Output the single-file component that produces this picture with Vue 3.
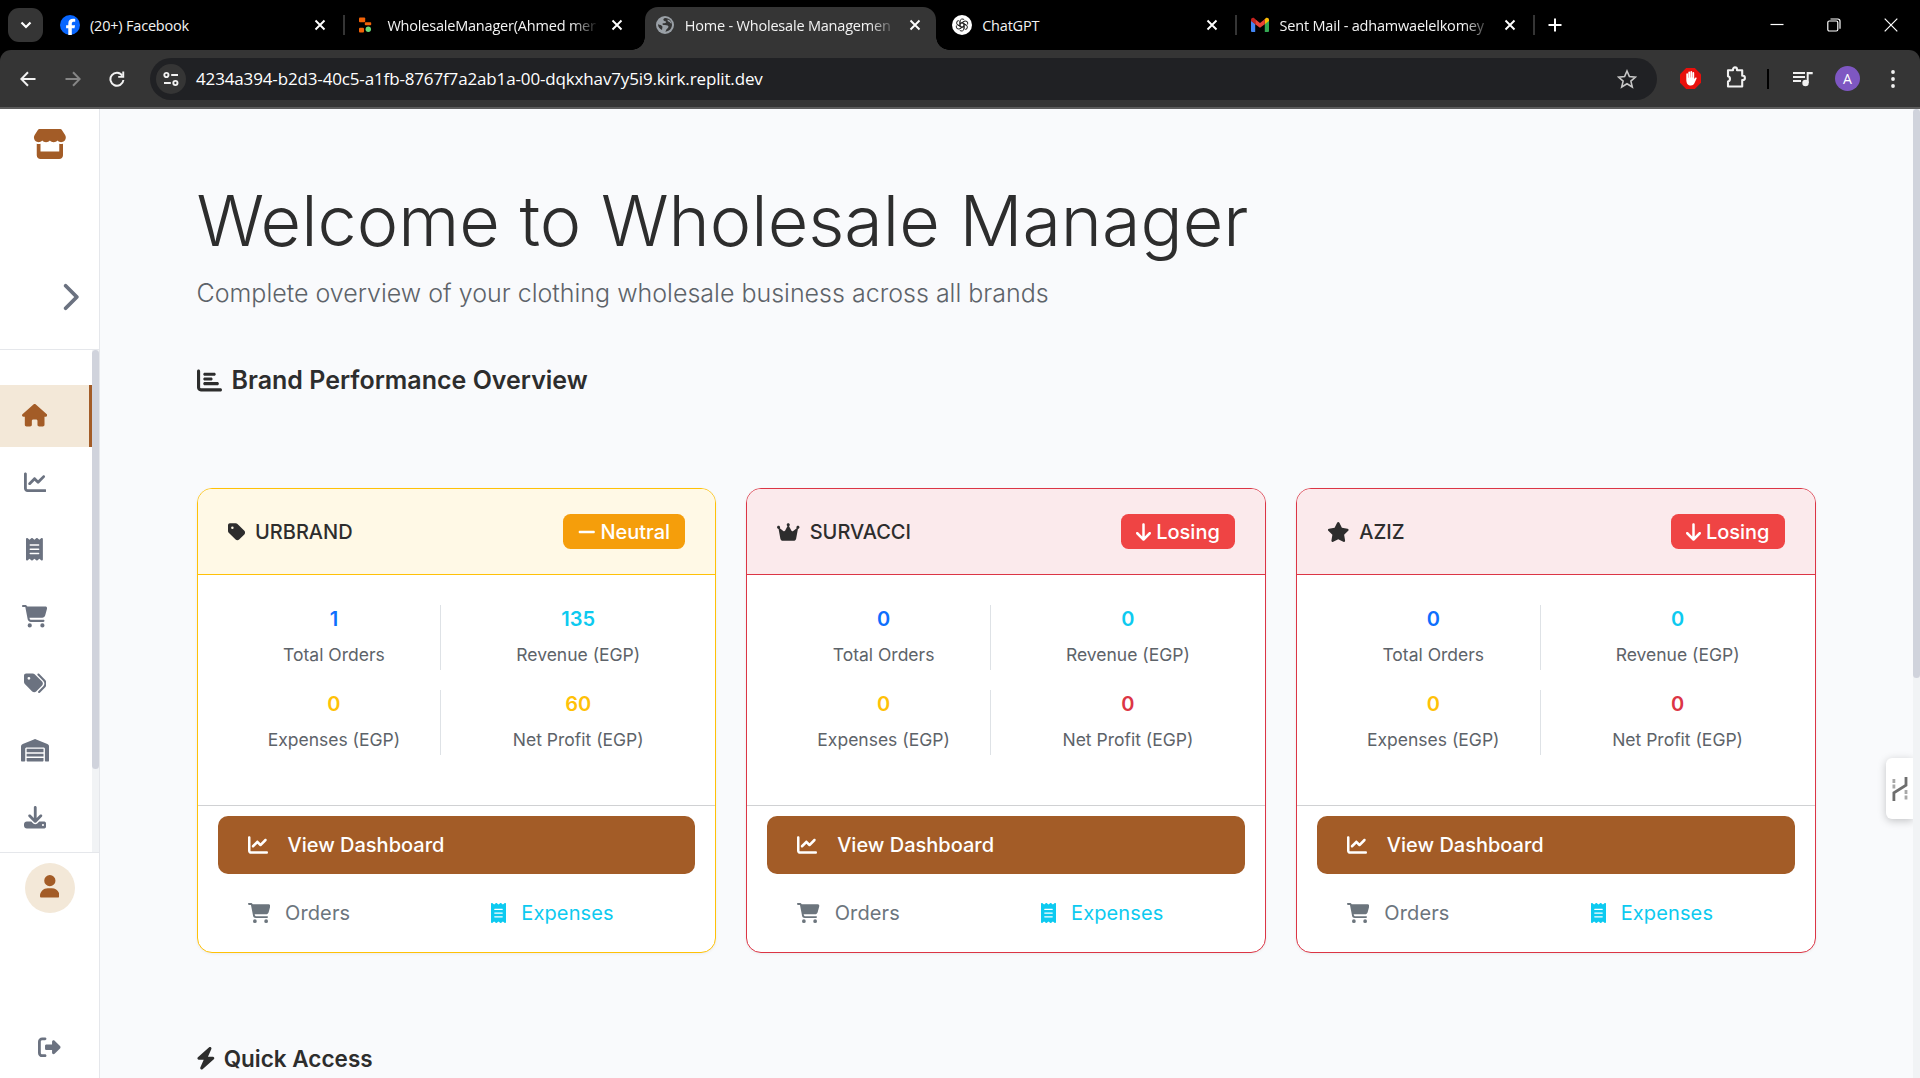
<script setup>
import { h } from 'vue'

const icons = {
  store: [576, 'M547.6 103.8L490.3 13.1C485.2 5 476.1 0 466.4 0H109.6C99.9 0 90.8 5 85.7 13.1L28.3 103.8c-29.6 46.8-3.4 111.9 51.9 119.4c4 .5 8.1 .8 12.1 .8c26.1 0 49.3-11.4 65.2-29c15.9 17.6 39.1 29 65.2 29c26.1 0 49.3-11.4 65.2-29c15.9 17.6 39.1 29 65.2 29c26.2 0 49.3-11.4 65.2-29c16 17.6 39.1 29 65.2 29c4.1 0 8.1-.3 12.1-.8c55.5-7.4 81.8-72.5 52.1-119.4zM499.7 254.9l-.1 0c-5.3 .7-10.7 1.1-16.2 1.1c-12.4 0-24.3-1.9-35.4-5.3V384H128V250.6c-11.2 3.5-23.2 5.4-35.6 5.4c-5.5 0-11-.4-16.3-1.1l-.1 0c-4.1-.6-8.1-1.3-12-2.3V384v64c0 35.3 28.7 64 64 64H448c35.3 0 64-28.7 64-64V384 252.6c-4 1-8 1.8-12.3 2.3z'],
  chevron: [320, 'M310.6 233.4c12.5 12.5 12.5 32.8 0 45.3l-192 192c-12.5 12.5-32.8 12.5-45.3 0s-12.5-32.8 0-45.3L242.7 256 73.4 86.6c-12.5-12.5-12.5-32.8 0-45.3s32.8-12.5 45.3 0l192 192z'],
  house: [576, 'M575.8 255.5c0 18-15 32.1-32 32.1h-32l.7 160.2c0 2.7-.2 5.4-.5 8.1V472c0 22.1-17.9 40-40 40H456c-1.1 0-2.2 0-3.3-.1c-1.4 .1-2.8 .1-4.2 .1H416 392c-22.1 0-40-17.9-40-40V448 384c0-17.7-14.3-32-32-32H256c-17.7 0-32 14.3-32 32v64 24c0 22.1-17.9 40-40 40H160 128.1c-1.5 0-3-.1-4.5-.2c-1.2 .1-2.4 .2-3.6 .2H104c-22.1 0-40-17.9-40-40V360c0-.9 0-1.9 .1-2.8V287.6H32c-18 0-32-14-32-32.1c0-9 3-17 10-24L266.4 8c7-7 15-8 22-8s15 2 21 7L564.8 231.5c8 7 12 15 11 24z'],
  line: [512, 'M64 64c0-17.7-14.3-32-32-32S0 46.3 0 64V400c0 44.2 35.8 80 80 80H480c17.7 0 32-14.3 32-32s-14.3-32-32-32H80c-8.8 0-16-7.2-16-16V64zm406.6 86.6c12.5-12.5 12.5-32.8 0-45.3s-32.8-12.5-45.3 0L320 210.7l-57.4-57.4c-12.5-12.5-32.8-12.5-45.3 0l-112 112c-12.5 12.5-12.5 32.8 0 45.3s32.8 12.5 45.3 0L240 221.3l57.4 57.4c12.5 12.5 32.8 12.5 45.3 0l128-128z'],
  receipt: [384, 'M14 2.2C22.5-1.7 32.5-.3 39.6 5.8L80 40.4 120.4 5.8c9-7.7 22.3-7.7 31.2 0L192 40.4 232.4 5.8c9-7.7 22.3-7.7 31.2 0L304 40.4 344.4 5.8c7.1-6.1 17.1-7.5 25.6-3.6s14 12.4 14 21.8V488c0 9.4-5.5 17.9-14 21.8s-18.5 2.5-25.6-3.6L304 471.6l-40.4 34.6c-9 7.7-22.3 7.7-31.2 0L192 471.6l-40.4 34.6c-9 7.7-22.3 7.7-31.2 0L80 471.6 39.6 506.2c-7.1 6.1-17.1 7.5-25.6 3.6S0 497.4 0 488V24C0 14.6 5.5 6.1 14 2.2zM96 144c-8.8 0-16 7.2-16 16s7.2 16 16 16H288c8.8 0 16-7.2 16-16s-7.2-16-16-16H96zM80 352c0 8.8 7.2 16 16 16H288c8.8 0 16-7.2 16-16s-7.2-16-16-16H96c-8.8 0-16 7.2-16 16zM96 240c-8.8 0-16 7.2-16 16s7.2 16 16 16H288c8.8 0 16-7.2 16-16s-7.2-16-16-16H96z'],
  cart: [576, 'M0 24C0 10.7 10.7 0 24 0H69.5c22 0 41.5 12.8 50.6 32h411c26.3 0 45.5 25 38.6 50.4l-41 152.3c-8.5 31.4-37 53.3-69.5 53.3H170.7l5.4 28.5c2.2 11.3 12.1 19.5 23.6 19.5H488c13.3 0 24 10.7 24 24s-10.7 24-24 24H199.7c-34.6 0-64.3-24.6-70.7-58.5L77.4 54.5c-.7-3.8-4-6.5-7.9-6.5H24C10.7 48 0 37.3 0 24zM128 464a48 48 0 1 1 96 0 48 48 0 1 1 -96 0zm336-48a48 48 0 1 1 0 96 48 48 0 1 1 0-96z'],
  tags: [512, 'M345 39.1L472.8 168.4c52.4 53 52.4 138.2 0 191.2L360.8 472.9c-9.3 9.4-24.5 9.5-33.9 .2s-9.5-24.5-.2-33.9L438.6 325.9c33.9-34.3 33.9-89.4 0-123.7L310.9 72.9c-9.3-9.4-9.2-24.6 .2-33.9s24.6-9.2 33.9 .2zM0 229.5V80C0 53.5 21.5 32 48 32H197.5c17 0 33.3 6.7 45.3 18.7l168 168c25 25 25 65.5 0 90.5L277.3 442.7c-25 25-65.5 25-90.5 0l-168-168C6.7 262.7 0 246.5 0 229.5zM144 144a32 32 0 1 0 -64 0 32 32 0 1 0 64 0z'],
  warehouse: [640, 'M0 488V171.3c0-26.2 15.9-49.7 40.2-59.4L308.1 4.8c7.6-3.1 16.1-3.1 23.8 0L599.8 111.9c24.3 9.7 40.2 33.3 40.2 59.4V488c0 13.3-10.7 24-24 24H568c-13.3 0-24-10.7-24-24V224c0-17.7-14.3-32-32-32H128c-17.7 0-32 14.3-32 32V488c0 13.3-10.7 24-24 24H24c-13.3 0-24-10.7-24-24zm488 24l-336 0c-13.3 0-24-10.7-24-24V432H512l0 56c0 13.3-10.7 24-24 24zM128 400V336H512v64H128zm0-96V224H512l0 80H128z'],
  download: [512, 'M288 32c0-17.7-14.3-32-32-32s-32 14.3-32 32V274.7l-73.4-73.4c-12.5-12.5-32.8-12.5-45.3 0s-12.5 32.8 0 45.3l128 128c12.5 12.5 32.8 12.5 45.3 0l128-128c12.5-12.5 12.5-32.8 0-45.3s-32.8-12.5-45.3 0L288 274.7V32zM64 352c-35.3 0-64 28.7-64 64v32c0 35.3 28.7 64 64 64H448c35.3 0 64-28.7 64-64V416c0-35.3-28.7-64-64-64H346.5l-45.3 45.3c-25 25-65.5 25-90.5 0L165.5 352H64zm368 56a24 24 0 1 1 0 48 24 24 0 1 1 0-48z'],
  user: [448, 'M224 256A128 128 0 1 0 224 0a128 128 0 1 0 0 256zm-45.7 48C79.8 304 0 383.8 0 482.3C0 498.7 13.3 512 29.7 512H418.3c16.4 0 29.7-13.3 29.7-29.7C448 383.8 368.2 304 269.7 304H178.3z'],
  logout: [512, 'M377.9 105.9L500.7 228.7c7.2 7.2 11.3 17.1 11.3 27.3s-4.1 20.1-11.3 27.3L377.9 406.1c-6.4 6.4-15 9.9-24 9.9c-18.7 0-33.9-15.2-33.9-33.9l0-62.1-128 0c-17.7 0-32-14.3-32-32l0-64c0-17.7 14.3-32 32-32l128 0 0-62.1c0-18.7 15.2-33.9 33.9-33.9c9 0 17.6 3.6 24 9.9zM160 96L96 96c-17.7 0-32 14.3-32 32l0 256c0 17.7 14.3 32 32 32l64 0c17.7 0 32 14.3 32 32s-14.3 32-32 32l-64 0c-53 0-96-43-96-96L0 128C0 75 43 32 96 32l64 0c17.7 0 32 14.3 32 32s-14.3 32-32 32z'],
  bars: [512, 'M32 32c17.7 0 32 14.3 32 32V400c0 8.8 7.2 16 16 16H480c17.7 0 32 14.3 32 32s-14.3 32-32 32H80c-44.2 0-80-35.8-80-80V64C0 46.3 14.3 32 32 32zm96 96c0-17.7 14.3-32 32-32l192 0c17.7 0 32 14.3 32 32s-14.3 32-32 32l-192 0c-17.7 0-32-14.3-32-32zm32 64H288c17.7 0 32 14.3 32 32s-14.3 32-32 32H160c-17.7 0-32-14.3-32-32s14.3-32 32-32zm0 96H416c17.7 0 32 14.3 32 32s-14.3 32-32 32H160c-17.7 0-32-14.3-32-32s14.3-32 32-32z'],
  tag: [448, 'M0 80V229.5c0 17 6.7 33.3 18.7 45.3l176 176c25 25 65.5 25 90.5 0L418.7 317.3c25-25 25-65.5 0-90.5l-176-176c-12-12-28.3-18.7-45.3-18.7H48C21.5 32 0 53.5 0 80zm112 32a32 32 0 1 1 0 64 32 32 0 1 1 0-64z'],
  crown: [576, 'M309 106c11.4-7 19-19.7 19-34c0-22.1-17.9-40-40-40s-40 17.9-40 40c0 14.4 7.6 27 19 34L209.7 220.6c-9.1 18.2-32.7 23.4-48.6 10.7L72 160c5-6.7 8-15 8-24c0-22.1-17.9-40-40-40S0 113.9 0 136s17.9 40 40 40c.2 0 .5 0 .7 0L86.4 427.4c5.5 30.4 32 52.6 63 52.6H426.6c30.9 0 57.4-22.1 63-52.6L535.3 176c.2 0 .5 0 .7 0c22.1 0 40-17.9 40-40s-17.9-40-40-40s-40 17.9-40 40c0 9 3 17.3 8 24l-89.1 71.3c-15.9 12.7-39.5 7.5-48.6-10.7L309 106z'],
  star: [576, 'M316.9 18C311.6 7 300.4 0 288.1 0s-23.4 7-28.8 18L195 150.3 51.4 171.5c-12 1.8-22 10.2-25.7 21.7s-.7 24.2 7.9 32.7L137.8 329 113.2 474.7c-2 12 3 24.2 12.9 31.3s23 8 33.8 2.3l128.3-68.5 128.3 68.5c10.8 5.7 23.9 4.9 33.8-2.3s14.9-19.3 12.9-31.3L438.5 329 542.7 225.9c8.6-8.5 11.7-21.2 7.9-32.7s-13.7-19.9-25.7-21.7L381.2 150.3 316.9 18z'],
  minus: [448, 'M432 256c0 17.7-14.3 32-32 32L48 288c-17.7 0-32-14.3-32-32s14.3-32 32-32l352 0c17.7 0 32 14.3 32 32z'],
  down: [384, 'M169.4 470.6c12.5 12.5 32.8 12.5 45.3 0l160-160c12.5-12.5 12.5-32.8 0-45.3s-32.8-12.5-45.3 0L224 370.8 224 64c0-17.7-14.3-32-32-32s-32 14.3-32 32l0 306.7L54.6 265.4c-12.5-12.5-32.8-12.5-45.3 0s-12.5 32.8 0 45.3l160 160z'],
  bolt: [448, 'M349.4 44.6c5.9-13.7 1.5-29.7-10.6-38.5s-28.6-8-39.9 1.8l-256 224c-10 8.8-13.6 22.9-8.9 35.3S50.7 288 64 288H175.5L98.6 467.4c-5.9 13.7-1.5 29.7 10.6 38.5s28.6 8 39.9-1.8l256-224c10-8.8 13.6-22.9 8.9-35.3s-16.6-20.7-30-20.7H272.5L349.4 44.6z'],
}

// Solid glyph drawn one em tall, in the text colour.
const Icon = ({ name }) => {
  const [w, d] = icons[name]
  return h('svg', { viewBox: `0 0 ${w} 512`, style: { height: '1em', width: `${w / 512}em`, flex: 'none', display: 'block' } }, [
    h('path', { fill: 'currentColor', d }),
  ])
}
Icon.props = ['name']

const tabs = [
  { id: 'fb', title: '(20+) Facebook', sep: true },
  { id: 'replit', title: 'WholesaleManager(Ahmed mer', fade: true },
  { id: 'globe', title: 'Home - Wholesale Managemen', active: true, fade: true },
  { id: 'gpt', title: 'ChatGPT', sep: true },
  { id: 'gmail', title: 'Sent Mail - adhamwaelelkomey', sep: true, fade: true },
]

const nav = ['house', 'line', 'receipt', 'cart', 'tags', 'warehouse', 'download']

const brand = (name, icon, tone, badge, badgeIcon, values) => ({
  name, icon, tone, badge, badgeIcon,
  stats: [
    { label: 'Total Orders', value: values[0], color: 'blue' },
    { label: 'Revenue (EGP)', value: values[1], color: 'cyan' },
    { label: 'Expenses (EGP)', value: values[2], color: 'amber' },
    { label: 'Net Profit (EGP)', value: values[3], color: tone === 'neutral' ? 'amber' : 'red' },
  ],
})
const brands = [
  brand('URBRAND', 'tag', 'neutral', 'Neutral', 'minus', [1, 135, 0, 60]),
  brand('SURVACCI', 'crown', 'losing', 'Losing', 'down', [0, 0, 0, 0]),
  brand('AZIZ', 'star', 'losing', 'Losing', 'down', [0, 0, 0, 0]),
]
</script>

<template>
  <div class="window">
    <header class="tabstrip">
      <div class="tab-search">
        <svg width="12" height="8" viewBox="0 0 12 8"><path d="M1.5 1.5 6 6l4.500-4.500" fill="none" stroke="#fff" stroke-width="2.200" /></svg>
      </div>
      <div v-for="t in tabs" :key="t.id" class="slot">
        <div class="tab" :class="{ active: t.active }">
          <span class="fav">
            <svg v-if="t.id === 'fb'" width="20" height="20" viewBox="0 0 20 20">
              <circle cx="10" cy="10" r="10" fill="#0866ff" />
              <path d="M8.300 20v-6.700H6.100v-3.100h2.200V8.800c0-3.500 1.600-5.100 5-5.100.6 0 1.500.1 1.900.2v2.900c-.3 0-.6-.1-1.100-.1-1.700 0-2.300.6-2.300 2.300v1.200h3.300l-.6 3.100h-2.700V20z" fill="#fff" />
            </svg>
            <svg v-else-if="t.id === 'replit'" width="20" height="20" viewBox="0 0 20 20">
              <rect x="2" y="2.500" width="6.200" height="4.800" rx="1" fill="#f26207" />
              <rect x="7.800" y="7.300" width="6.400" height="3" rx=".8" fill="#f26207" />
              <rect x="2" y="12.700" width="5" height="4.800" rx="1" fill="#f26207" />
              <circle cx="11.300" cy="14.300" r="2.700" fill="#6bdc7a" />
            </svg>
            <svg v-else-if="t.id === 'globe'" width="20" height="20" viewBox="0 0 20 20">
              <circle cx="10" cy="10" r="9" fill="#9aa0a6" />
              <path d="M10.500 3.100C8.300 3.300 8 4.600 8.700 5.400c.8.900 2.300.3 2.500 1.600.1 1-1.500 1.200-2.900 1.300-1.200.2-1 1.500.2 1.700 1.800.2 4.300-.2 4.900 1.300.5 1.300-.9 2-1.600 2.700-.7.800-.6 1.700-1.700 2.600 3.900-.1 6.700-2.900 6.900-6.600.1-3.500-2.500-6.700-6.500-6.900z" fill="#353535" />
              <path d="M3 9.200c1.700.5 4 1 4.400 2.400.3 1.300-.5 1.900-.3 3.300C4.700 13.900 3 11.900 3 9.200z" fill="#353535" />
              <path d="M12.600 4.600c-.3 1.500.4 2.200 1.700 2.300 1 .2.7 1.300 2.300 1.500-.5-1.900-2-3.300-4-3.800z" fill="#9aa0a6" />
            </svg>
            <svg v-else-if="t.id === 'gpt'" width="20" height="20" viewBox="0 0 20 20">
              <circle cx="10" cy="10" r="10" fill="#fff" />
              <g fill="none" stroke="#222" stroke-width="1">
                <path v-for="a in 6" :key="a" :transform="`rotate(${a * 60} 10 10)`" d="M8 11.200V6.300a2.400 2.400 0 0 1 4.300-1.400M8 8.800l4.200-2.400" />
              </g>
            </svg>
            <svg v-else width="20" height="20" viewBox="0 0 20 20">
              <path d="M1 16V5.500l4.200 3.200V17H2a1 1 0 0 1-1-1z" fill="#4285f4" />
              <path d="M14.800 17V8.700L19 5.500V16a1 1 0 0 1-1 1z" fill="#34a853" />
              <path d="M14.800 4.300v4.900L19 6V4.800c0-1.900-2-2.700-3.200-1.700z" fill="#fbbc04" />
              <path d="M5.200 9.200V4.300L10 8l4.800-3.700v4.900L10 12.800z" fill="#ea4335" />
              <path d="M1 4.800V6l4.200 3.200V4.300L4.200 3.100C3 2.100 1 2.900 1 4.800z" fill="#c5221f" />
            </svg>
          </span>
          <span class="tab-title" :class="{ fade: t.fade }">{{ t.title }}</span>
          <svg class="tab-x" width="12" height="12" viewBox="0 0 12 12"><path d="M1.500 1.500l9 9M10.500 1.500l-9 9" stroke="#fff" stroke-width="1.900" /></svg>
        </div>
        <i v-if="t.sep" class="tab-sep"></i>
      </div>
      <svg class="new-tab" width="14" height="14" viewBox="0 0 14 14"><path d="M7 .5v13M.5 7h13" stroke="#fff" stroke-width="2" /></svg>
      <div class="controls">
        <svg width="14" height="14" viewBox="0 0 14 14"><path d="M.5 6.500h13" stroke="#fff" stroke-width="1.200" /></svg>
        <svg width="14" height="14" viewBox="0 0 14 14" fill="none" stroke="#fff" stroke-width="1.200"><rect x=".8" y="3" width="10" height="10" rx="1.500" /><path d="M3.500 1h7.300a2.200 2.200 0 0 1 2.200 2.200v7.600" /></svg>
        <svg width="14" height="14" viewBox="0 0 14 14"><path d="M.7.700l12.600 12.600M13.300.700.7 13.300" stroke="#fff" stroke-width="1.200" /></svg>
      </div>
    </header>

    <div class="toolbar-back">
      <div class="toolbar">
        <div class="nav-buttons">
          <svg width="16" height="16" viewBox="0 0 16 16" fill="none" stroke="#f1f1f1" stroke-width="2"><path d="M15.500 8H1.800M8 1.300 1.300 8 8 14.700" /></svg>
          <svg width="16" height="16" viewBox="0 0 16 16" fill="none" stroke="#868686" stroke-width="2"><path d="M.5 8h13.700M8 1.300 14.700 8 8 14.700" /></svg>
          <svg width="16" height="16" viewBox="0 0 16 16"><path d="M13.300 4.600A6.500 6.500 0 1 0 14.400 9" fill="none" stroke="#f1f1f1" stroke-width="2" /><path d="M15.200.500v6.300H9.200V4.900h4.100V.500z" fill="#f1f1f1" /></svg>
        </div>
        <div class="omnibox">
          <span class="site">
            <svg width="16" height="16" viewBox="0 0 16 16" fill="none" stroke="#f1f1f1" stroke-width="1.900"><circle cx="3.400" cy="4" r="2.100" /><path d="M8.200 4H15M1 12h6.800" /><circle cx="12.400" cy="12" r="2.100" /></svg>
          </span>
          <span class="url">4234a394-b2d3-40c5-a1fb-8767f7a2ab1a-00-dqkxhav7y5i9.kirk.replit.dev</span>
          <svg class="bookmark" width="20" height="20" viewBox="0 0 20 20"><path d="M10 2l2.400 5.600 6.100.5-4.600 4 1.400 5.900-5.300-3.200L4.700 18l1.400-5.900-4.600-4 6.100-.5z" fill="none" stroke="#c7c7c7" stroke-width="1.600" /></svg>
        </div>
        <div class="ext">
          <svg width="21" height="21" viewBox="0 0 21 21">
            <path d="M6.200 0h8.600L21 6.200v8.600L14.800 21H6.200L0 14.800V6.200z" fill="#e8100c" />
            <path d="M6.300 11.400V6.100a.85.85 0 0 1 1.700 0v3.600h.3V4.400a.9.9 0 0 1 1.800 0v5h.3V3.900a.9.9 0 0 1 1.800 0v5.600h.3V4.900a.85.85 0 0 1 1.700 0v6l1-1.200c.6-.7 1.800-.1 1.400.8l-2.300 5c-.7 1.300-1.700 2-3.400 2-2.700 0-4.600-1.600-4.600-6.100z" fill="#fff" />
          </svg>
          <svg width="22" height="22" viewBox="0 0 22 22"><path d="M3 4.200h5V3.400a2 2 0 0 1 4 0v.8h5.200v5.600h.6a2 2 0 0 1 0 4.200h-.6v6.500H3v-5a2.700 2.700 0 0 0 0-5.200z" fill="none" stroke="#f1f1f1" stroke-width="2.100" stroke-linejoin="round" /></svg>
          <i></i>
          <svg width="20" height="16" viewBox="0 0 20 16" fill="#f1f1f1"><path d="M0 1h12v2H0zM0 5h12v2H0zM0 9h8v2H0z" /><circle cx="12.500" cy="12" r="3.200" /><path d="M13.700 1h6v2.200h-4V12h-2z" /></svg>
          <span class="avatar">A</span>
          <svg width="4" height="20" viewBox="0 0 4 20" fill="#f1f1f1"><circle cx="2" cy="3" r="1.900" /><circle cx="2" cy="10" r="1.900" /><circle cx="2" cy="17" r="1.900" /></svg>
        </div>
      </div>
    </div>

    <div class="page">
      <aside class="sidebar">
        <div class="side-head">
          <span class="logo"><Icon name="store" /></span>
          <span class="expand"><Icon name="chevron" /></span>
        </div>
        <div class="side-nav">
          <nav>
            <a v-for="(n, i) in nav" :key="n" :class="{ current: i === 0 }"><Icon :name="n" /></a>
          </nav>
          <div class="side-track"><div class="side-thumb"></div></div>
        </div>
        <div class="side-foot">
          <span class="person"><Icon name="user" /></span>
          <span class="logout"><Icon name="logout" /></span>
        </div>
      </aside>

      <main>
        <h1>Welcome to Wholesale Manager</h1>
        <p class="lead">Complete overview of your clothing wholesale business across all brands</p>
        <h2><Icon name="bars" /><span>Brand Performance Overview</span></h2>

        <section class="cards">
          <article v-for="b in brands" :key="b.name" class="card" :class="b.tone">
            <div class="card-head">
              <h3><Icon :name="b.icon" /><span>{{ b.name }}</span></h3>
              <span class="badge"><Icon :name="b.badgeIcon" /><span>{{ b.badge }}</span></span>
            </div>
            <div class="stats">
              <div v-for="s in b.stats" :key="s.label" class="stat">
                <strong :class="s.color">{{ s.value }}</strong>
                <small>{{ s.label }}</small>
              </div>
            </div>
            <div class="card-foot">
              <a class="btn primary"><Icon name="line" /><span>View Dashboard</span></a>
              <div class="pair">
                <a class="btn orders"><Icon name="cart" /><span>Orders</span></a>
                <a class="btn expenses"><Icon name="receipt" /><span>Expenses</span></a>
              </div>
            </div>
          </article>
        </section>

        <h4><Icon name="bolt" /><span>Quick Access</span></h4>
      </main>

      <div class="widget">
        <svg width="16" height="26" viewBox="0 0 16 26" fill="none" stroke-width="2.800">
          <path d="M1.900 25v-8.200L14 9.300V1" stroke="#6e6e6e" />
          <path d="M1.900 3v10M14 14v11" stroke="#a8a8a8" stroke-dasharray="4 1.600" />
        </svg>
      </div>
      <div class="page-track"><div class="page-thumb"></div></div>
    </div>
  </div>
</template>

<style>
html, body { margin: 0; height: 100%; overflow: hidden; }
</style>

<style scoped>
* { box-sizing: border-box; }
.window { width: 1920px; height: 1078px; overflow: hidden; display: flex; flex-direction: column; background: #f9fafc; font-family: Inter, "Noto Sans", sans-serif; color: #2d2d2d; }
svg { display: block; flex: none; }

/* Browser chrome */
.tabstrip { height: 50px; background: #000; display: flex; align-items: center; flex: none; font-family: "Open Sans", "Noto Sans", sans-serif; }
.tab-search { width: 35px; height: 34px; margin: 0 7px 0 8px; border-radius: 11px; background: #353535; display: flex; align-items: center; justify-content: center; }
.slot { width: 297.400px; height: 50px; display: flex; align-items: center; flex: none; }
.tab { width: 291px; height: 43px; margin-top: 7px; padding: 0 15px 7px 10px; display: flex; align-items: center; position: relative; }
.tab.active { background: #353535; border-radius: 13px 13px 0 0; }
.tab.active::before, .tab.active::after { content: ""; position: absolute; bottom: 0; width: 13px; height: 13px; }
.tab.active::before { left: -13px; background: radial-gradient(circle at 0 0, transparent 12.500px, #353535 13px); }
.tab.active::after { right: -13px; background: radial-gradient(circle at 100% 0, transparent 12.500px, #353535 13px); }
.fav { width: 20px; margin-right: 10px; }
.tab-title { width: 212px; margin-right: 12px; white-space: nowrap; font-size: 14.500px; line-height: 22px; padding-top: 1px; letter-spacing: -.2px; color: #f3f3f3; }
.tab-title.fade { -webkit-mask-image: linear-gradient(90deg, #000 184px, transparent 212px); mask-image: linear-gradient(90deg, #000 184px, transparent 212px); }
.tab-sep { width: 2px; height: 20px; margin-left: 2px; background: #353535; }
.new-tab { margin-left: 11px; }
.controls { margin-left: auto; width: 128px; margin-right: 22px; display: flex; justify-content: space-between; }
.toolbar-back { background: #000; flex: none; height: 59px; }
.toolbar { height: 59px; background: #353535; border-bottom: 2px solid #5c5c5c; border-radius: 11px 11px 0 0; display: flex; align-items: center; }
.nav-buttons { display: flex; gap: 29px; padding-left: 20px; width: 150px; }
.nav-buttons svg:last-child { margin-left: -1px; }
.omnibox { width: 1507px; height: 42px; border-radius: 21px; background: #202124; display: flex; align-items: center; padding: 0 20px 0 6px; }
.site { width: 30px; height: 30px; border-radius: 50%; background: #353535; display: flex; align-items: center; justify-content: center; }
.url { margin-left: 10px; padding-top: 1px; font: 17px/24px "Open Sans", "Noto Sans", sans-serif; letter-spacing: -.145px; color: #fff; white-space: nowrap; }
.bookmark { margin-left: auto; }
.ext { display: flex; align-items: center; margin-left: 23px; }
.ext i { width: 2px; height: 20px; background: #000; margin: 0 24px 0 20px; }
.ext > svg:nth-child(2) { margin-left: 24px; margin-top: -3px; }
.avatar { width: 25px; height: 25px; border-radius: 50%; background: #7e57c2; color: #fff; font: 14px/25px "Open Sans", sans-serif; text-align: center; margin: 0 31px 0 22px; }

/* Page */
.page { flex: 1; display: flex; min-height: 0; position: relative; }
.sidebar { width: 100px; background: #fff; border-right: 1px solid #e5e7eb; display: flex; flex-direction: column; flex: none; color: #6b7280; }
.side-head { height: 241px; border-bottom: 1px solid #e5e7eb; padding: 20px 0 37px; display: flex; flex-direction: column; justify-content: space-between; font-size: 30px; }
.logo { align-self: center; color: #a35c27; }
.expand { margin-left: 60px; }
.side-nav { height: 502px; display: flex; overflow: hidden; font-size: 22.500px; }
.side-nav nav { width: 92px; padding-top: 35px; display: flex; flex-direction: column; gap: 5px; }
.side-nav a { height: 62px; flex: none; width: 92px; padding: 0 22.500px 1px 0; display: flex; align-items: center; justify-content: center; }
.side-nav a.current { background: #f3e8d8; color: #a35c27; border-right: 3px solid #a35c27; padding-right: 19.500px; }
.side-track { width: 7px; background: #f1f3f5; }
.side-thumb { height: 419px; border-radius: 4px; background: #d0d3dc; }
.side-foot { flex: 1; border-top: 1px solid #e5e7eb; padding: 10px 0 20px; display: flex; flex-direction: column; align-items: center; justify-content: space-between; font-size: 22.500px; }
.person { width: 50px; height: 50px; border-radius: 50%; background: #f3e8d8; color: #a35c27; display: flex; align-items: center; justify-content: center; padding-bottom: 3px; }

main { width: 1813px; padding: 70px 97px 0 96.500px; overflow: hidden; }
h1 { margin: 0; font-size: 70px; line-height: 84px; font-weight: 300; white-space: nowrap; }
.lead { margin: 11px 0 0; font-size: 25px; line-height: 38px; font-weight: 300; color: #5d6369; white-space: nowrap; }
h2 { margin: 53px 0 0; font-size: 25px; line-height: 30px; font-weight: 600; display: flex; align-items: center; gap: 10px; }
.cards { margin-top: 93px; width: 1619px; display: grid; grid-template-columns: repeat(3, 1fr); gap: 30px; }
.card { height: 465px; border: 1px solid; border-radius: 15px; background: #fff; overflow: hidden; display: flex; flex-direction: column; box-shadow: 0 1px 3px rgba(0, 0, 0, .06); }
.neutral { border-color: #ffc107; --head: #fff9e6; --badge: #f59e0b; --line: #ffc107; }
.losing { border-color: #dc3545; --head: #fbeaec; --badge: #ef4444; --line: #dc3545; }
.card-head { height: 86px; padding: 0 30px; background: var(--head); border-bottom: 1px solid var(--line); display: flex; align-items: center; justify-content: space-between; }
h3 { margin: 0; font-size: 20px; line-height: 24px; font-weight: 500; display: flex; align-items: center; gap: 10px; }
.badge { height: 35px; padding: 0 15px; border-radius: 7.500px; background: var(--badge); color: #fff; font-size: 20px; font-weight: 500; display: flex; align-items: center; gap: 5px; }
.stats { height: 230px; padding: 30px; display: grid; grid-template-columns: 1fr 1fr; grid-auto-rows: 65px; column-gap: 30px; row-gap: 20px; }
.stat { text-align: center; padding-top: 2px; }
.stat:nth-child(odd) { border-right: 1px solid #dee2e6; }
strong { display: block; font-size: 20px; line-height: 24px; font-weight: 600; margin-bottom: 11px; }
small { display: block; font-size: 17.500px; line-height: 26px; color: #5d6369; }
.blue { color: #0d6efd; } .cyan { color: #0dcaf0; } .amber { color: #ffc107; } .red { color: #dc3545; }
.card-foot { flex: 1; border-top: 1px solid #d0d1d3; padding: 10px 20px; display: flex; flex-direction: column; gap: 10px; }
.pair { display: grid; grid-template-columns: 1fr 1fr; gap: 10px; }
.btn { height: 58px; border-radius: 10px; padding: 0 30px; display: flex; align-items: center; gap: 15px; font-size: 20px; }
.primary { background: #a35c27; color: #fff; gap: 20px; font-weight: 500; }
.pair .btn { letter-spacing: .12px; }
.orders { color: #6c757d; }
.expenses { color: #0dcaf0; }
h4 { margin: 92px 0 0; font-size: 22.500px; line-height: 27px; font-weight: 600; display: flex; align-items: center; gap: 7.500px; }
h4 svg { margin: 0 .500px 0 -.500px; }

.page-track { width: 7px; background: #f1f3f5; }
.page-thumb { height: 569px; border-radius: 4px; background: #d0d3dc; }
.widget { position: absolute; right: 7px; top: 649px; width: 27px; height: 61px; border-radius: 6px 0 0 6px; background: #fff; box-shadow: 0 2px 8px rgba(0, 0, 0, .22); clip-path: inset(-12px 0 -12px -12px); display: flex; align-items: center; padding-left: 6px; }
</style>
